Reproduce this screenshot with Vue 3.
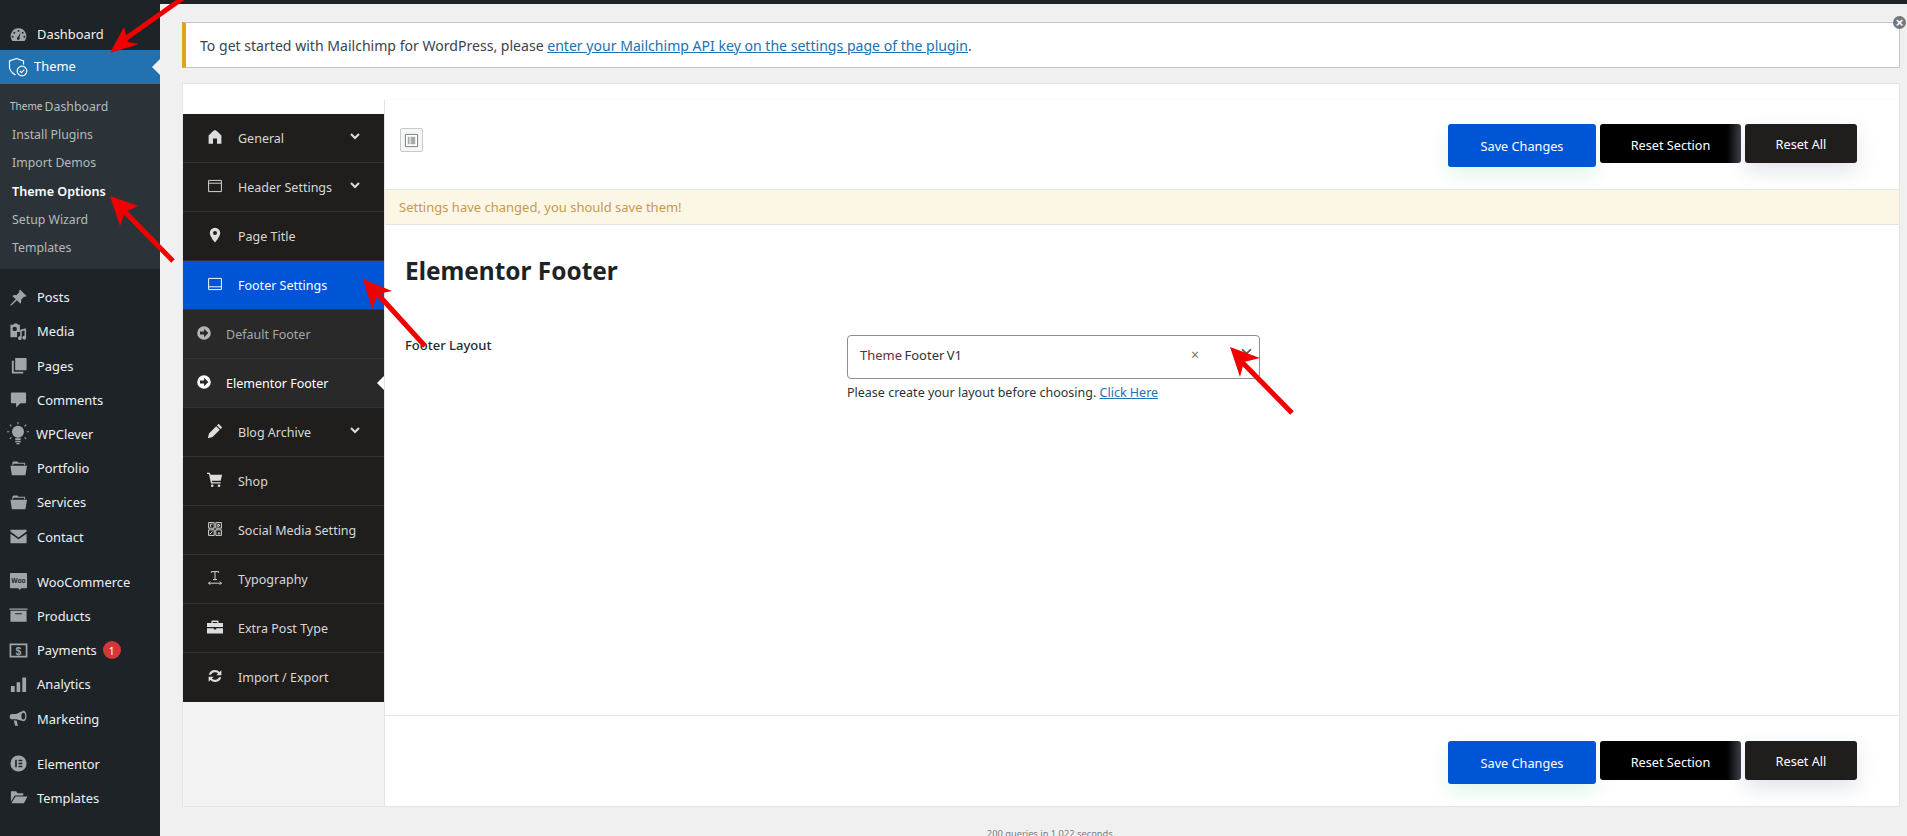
<script setup>
const fill = {
  dashboard: 'M10 3.5a8.2 8.2 0 0 0-6.4 13.3h12.8A8.2 8.2 0 0 0 10 3.5z M10 5.2a1 1 0 1 1 0 2 1 1 0 0 1 0-2z M5.6 7.2a1 1 0 1 1 0 2 1 1 0 0 1 0-2z M14.4 7.2a1 1 0 1 1 0 2 1 1 0 0 1 0-2z M3.8 11.4a1 1 0 1 1 0 2 1 1 0 0 1 0-2z M16.2 11.4a1 1 0 1 1 0 2 1 1 0 0 1 0-2z M12.2 8.2l-1.2 5a1.5 1.5 0 1 1-1.8-.4z',
  posts: 'M11.5 1.5l7 7-1.5 1-1-.5-3.3 3.3c.5 1.7.2 3-.7 4.2l-3.6-3.6L2.5 18.5h-1v-1l5.6-5.6L3.5 8.3c1.2-.9 2.5-1.2 4.2-.7L11 4.3l-.5-1z',
  media: 'M1.5 3h3l1-1.5h3l1 1.5h2v7.5H8.500V16h-7z M6 5a2.300 2.300 0 1 0 0 4.600A2.300 2.300 0 0 0 6 5z M18 6.500v10a2 2 0 1 1-1.600-1.900V9l-3 .7v7.300a2 2 0 1 1-1.600-1.900V8.200z',
  pages: 'M6.500 2h12v13h-12z M3 5h2v11.500h10V18.500H3z',
  comments: 'M3 2.500h14a1 1 0 0 1 1 1v9.500a1 1 0 0 1-1 1h-5l-4.500 4.500V14H3a1 1 0 0 1-1-1V3.500a1 1 0 0 1 1-1z',
  folder: 'M3.500 4l1-1.500h4.500l1 1.500h7v2.500H16V5H4.500v1.500h-1z M1.500 7h17.500l-1.700 10H3z',
  contact: 'M1.500 3h17v1.800L10 11 1.500 4.800z M1.500 7L10 13l8.500-6v10h-17z',
  products: 'M.5 2.500h19v1.500H.5z M1.500 5h17v11.500h-17z M6.500 7.500v1.200h7V7.500z',
  analytics: 'M2 11.500h4V18H2z M8 7.500h3.800V18H8z M14 2.500h4V18h-4z',
  marketing: 'M15.500 1.500a4 6 0 0 1 0 11.500l-8-2.200H3.500a2.500 2.500 0 0 1 0-5.500h4z M15 4a2 3.500 0 1 0 .1 7 2 3.500 0 0 0-.1-7z M5 12h3l1.500 5.500h-3z',
  elementor: 'M10 1.500a8.500 8.500 0 1 0 0 17 8.500 8.500 0 0 0 0-17z M6.500 6h1.700v8H6.500z M10 6h4v1.700h-4z M10 9.200h4v1.700h-4z M10 12.300h4V14h-4z',
  templates: 'M2 3.500h5.500l1.500 2h6V8H6L2 14.500z M6.800 9H19.500l-3.800 7H2.500z',
  home: 'M10 1.500c1.200 0 2 .8 3 1.600L18 8v10.500h-5.500V12h-5v6.500H2V8l5-4.900c1-.8 1.800-1.600 3-1.600z',
  pin: 'M10 1a6.500 6.500 0 0 0-6.500 6.500C3.500 12 10 19.500 10 19.500S16.500 12 16.500 7.500A6.500 6.500 0 0 0 10 1z M10 5a2.500 2.500 0 1 1 0 5 2.500 2.500 0 0 1 0-5z',
  go: 'M10 1.500a8.500 8.500 0 1 0 0 17 8.500 8.500 0 0 0 0-17z M5 8h5V4.800L15.500 10 10 15.200V12H5z',
  pencil: 'M14.500 1l4.500 4.500-2 2L12.500 3z M11.500 4l4.500 4.500-9 9L1 19l1.500-6z',
  cart: 'M0 1h3.500l1 2.500H19l-2 7.500H6.200l.5 1.800H17V14.500H5L2.500 2.500H0z M6.500 15.500a1.700 1.700 0 1 1 0 3.400 1.700 1.700 0 0 1 0-3.400z M15 15.500a1.700 1.700 0 1 1 0 3.400 1.700 1.700 0 0 1 0-3.400z',
  case: 'M7 2h6a1.500 1.500 0 0 1 1.500 1.500V5H20v5H0V5h5.500V3.500A1.500 1.500 0 0 1 7 2z M7.200 3.700V5h5.600V3.700z M0 11.500h8.500V13h3v-1.500H20V18H0z',
  refresh: 'M10 2.500c2.300 0 4.300 1 5.700 2.500L18 2.700V9h-6.300l2.200-2.200A5.500 5.500 0 0 0 5 8.500H2.200A8 8 0 0 1 10 2.500z M2 11h6.300l-2.200 2.200A5.500 5.500 0 0 0 15 11.500h2.800A8 8 0 0 1 4.300 15L2 17.300z'
}
const stroke = {
  header: 'M2 3h16v14H2z M2 6.500h16',
  footer: 'M2 3h16v14H2z M2 13.500h16',
  social: 'M2 2h7v7H2z M11 2h7v7h-7z M2 11h7v7H2z M11 11h7v7h-7z M4.500 7.500V4h2.500 M13.500 3.800l2.800 1.700-2.800 1.700z M3.500 16.500l3.500-3.500 M14.500 14.500a1 1 0 1 0 1 0z',
  type: 'M5.500 3.500V2h9v1.500 M10 2v10 M7.500 12h5 M2 16.500h16 M4 14.500l-2 2 2 2 M16 14.500l2 2-2 2'
}
const side1 = [
  { t: 'Posts', i: 'posts' }, { t: 'Media', i: 'media' }, { t: 'Pages', i: 'pages' },
  { t: 'Comments', i: 'comments' }, { t: 'WPClever', i: 'clever' }, { t: 'Portfolio', i: 'folder' },
  { t: 'Services', i: 'folder' }, { t: 'Contact', i: 'contact' }
]
const side2 = [
  { t: 'WooCommerce', i: 'woo' }, { t: 'Products', i: 'products' }, { t: 'Payments', i: 'pay', badge: 1 },
  { t: 'Analytics', i: 'analytics' }, { t: 'Marketing', i: 'marketing' }
]
const side3 = [{ t: 'Elementor', i: 'elementor' }, { t: 'Templates', i: 'templates' }]
const subs = ['Install Plugins', 'Import Demos', 'Theme Options', 'Setup Wizard', 'Templates']
const nav = [
  { t: 'General', i: 'home', chev: true }, { t: 'Header Settings', i: 'header', chev: true },
  { t: 'Page Title', i: 'pin' }, { t: 'Footer Settings', i: 'footer', kind: 'active' },
  { t: 'Default Footer', i: 'go', kind: 'sub' }, { t: 'Elementor Footer', i: 'go', kind: 'sub on' },
  { t: 'Blog Archive', i: 'pencil', chev: true }, { t: 'Shop', i: 'cart' },
  { t: 'Social Media Setting', i: 'social' }, { t: 'Typography', i: 'type' },
  { t: 'Extra Post Type', i: 'case' }, { t: 'Import / Export', i: 'refresh' }
]
const arrows = [
  { l: '183,-2 118,44', h: '110,53 124,27 128,42 139,44' },
  { l: '173,261 122,209', h: '110,196 138,206 125,212 120,226' },
  { l: '425,346 374,290', h: '363,279 392,291 378,294 372,309' },
  { l: '1292,413 1238,358', h: '1230,347 1260,358 1244,362 1240,377' }
]
</script>

<template>
  <div class="page">
    <div class="topbar"></div>
    <div class="layout">
      <aside class="side">
        <a class="item first">
          <svg class="sicon" viewBox="0 0 20 20"><path :d="fill.dashboard" fill-rule="evenodd" /></svg>
          <span>Dashboard</span>
        </a>
        <a class="item current">
          <svg class="theme-icon" viewBox="0 0 20 20" fill="none" stroke="#fff" stroke-width="1.200">
            <path d="M8.500 1.500l7 2.500v3.500M8.500 1.500L1.500 4v6c0 4 3.500 6.500 6 8" />
            <circle cx="14" cy="14" r="4.800" fill="#2271b1" />
            <path d="M11.800 14l1.700 1.700 2.800-3" />
          </svg>
          <span>Theme</span>
        </a>
        <div class="submenu">
          <a class="sub"><small>Theme</small> Dashboard</a>
          <a v-for="s in subs" :key="s" class="sub" :class="{ strong: s === 'Theme Options' }">{{ s }}</a>
        </div>
        <div class="group">
          <a v-for="m in side1" :key="m.t" class="item">
            <svg v-if="m.i === 'clever'" class="sicon clever" viewBox="0 0 22 22">
              <circle cx="11" cy="9" r="5.500" />
              <path d="M8.500 15h5v1.500h-5z M8.500 17.200h5v1.300h-5z M9.500 19.200h3V20.500h-3z" />
              <path class="rays" d="M11 0v2 M1 9h2 M19 9h2 M3.500 2.500l1.500 1.500 M18.500 2.500L17 4 M3.500 15.500L5 14 M18.500 15.500L17 14" />
            </svg>
            <svg v-else class="sicon" viewBox="0 0 20 20"><path :d="fill[m.i]" fill-rule="evenodd" /></svg>
            <span>{{ m.t }}</span>
          </a>
        </div>
        <div class="group">
          <a v-for="m in side2" :key="m.t" class="item">
            <svg v-if="m.i === 'woo'" class="sicon" viewBox="0 0 20 20">
              <path d="M2 1h16a1 1 0 0 1 1 1v14a1 1 0 0 1-1 1h-5l-2 2-1-2H2a1 1 0 0 1-1-1V2a1 1 0 0 1 1-1z" />
              <text x="10" y="11.500" text-anchor="middle" class="woo">Woo</text>
            </svg>
            <svg v-else-if="m.i === 'pay'" class="sicon" viewBox="0 0 20 20">
              <path class="frame" d="M1.500 3.500h17v13h-17z" />
              <text x="10" y="14.500" text-anchor="middle" class="dollar">$</text>
            </svg>
            <svg v-else class="sicon" viewBox="0 0 20 20"><path :d="fill[m.i]" fill-rule="evenodd" /></svg>
            <span>{{ m.t }}</span>
            <b v-if="m.badge" class="badge">{{ m.badge }}</b>
          </a>
        </div>
        <div class="group">
          <a v-for="m in side3" :key="m.t" class="item">
            <svg class="sicon" viewBox="0 0 20 20"><path :d="fill[m.i]" fill-rule="evenodd" /></svg>
            <span>{{ m.t }}</span>
          </a>
        </div>
      </aside>

      <main class="main">
        <div class="notice">
          <span>To get started with Mailchimp for WordPress, please <a>enter your Mailchimp API key on the settings page of the plugin</a>.</span>
          <i class="dismiss">×</i>
        </div>
        <section class="panel">
          <div class="rail">
            <div class="rail-top"></div>
            <nav class="nav">
              <a v-for="n in nav" :key="n.t" class="nav-item" :class="n.kind">
                <svg class="nicon" viewBox="0 0 20 20">
                  <path v-if="fill[n.i]" :d="fill[n.i]" fill-rule="evenodd" />
                  <path v-else :d="stroke[n.i]" class="line" />
                </svg>
                <span class="nav-label">{{ n.t }}</span>
                <svg v-if="n.chev" class="chev" viewBox="0 0 10 7"><path d="M1 1l4 4 4-4" /></svg>
              </a>
            </nav>
            <div class="rail-bottom"></div>
          </div>
          <div class="content">
            <header class="bar">
              <div class="expand">
                <svg viewBox="0 0 16 16"><path class="frame2" d="M1.500 1.500h13v13h-13z" /><path class="fill2" d="M4 4h2v8H4z M7 4h5v8H7z" /></svg>
              </div>
              <div class="actions">
                <button class="btn save">Save Changes</button>
                <button class="btn reset-s">Reset Section</button>
                <button class="btn reset-a">Reset All</button>
              </div>
            </header>
            <div class="changed">Settings have changed, you should save them!</div>
            <div class="body">
              <h2>Elementor Footer</h2>
              <div class="field">
                <div class="field-label">Footer Layout</div>
                <div class="field-ctl">
                  <div class="select">
                    <span class="val"><em>Theme</em> Footer V1</span>
                    <span class="clear">×</span>
                    <svg class="caret" viewBox="0 0 10 7"><path d="M1 1l4 4 4-4" /></svg>
                  </div>
                  <p class="help">Please create your layout before choosing. <a>Click Here</a></p>
                </div>
              </div>
            </div>
            <footer class="bar bottom">
              <div></div>
              <div class="actions">
                <button class="btn save">Save Changes</button>
                <button class="btn reset-s">Reset Section</button>
                <button class="btn reset-a">Reset All</button>
              </div>
            </footer>
          </div>
        </section>
        <div class="queries">200 queries in 1.022 seconds.</div>
      </main>
    </div>
    <svg class="overlay" viewBox="0 0 1907 836">
      <g v-for="(a, k) in arrows" :key="k">
        <polyline :points="a.l" />
        <polygon :points="a.h" />
      </g>
    </svg>
  </div>
</template>

<style>
html, body { margin: 0; background: #f0f0f1; }
</style>

<style scoped>
.page { position: relative; width: 1907px; height: 836px; overflow: hidden; background: #f0f0f1; font-family: "Noto Sans", "Open Sans", sans-serif; color: #2c3338; display: flex; flex-direction: column; }
.topbar { height: 4px; background: #1d2327; flex: none; }
.layout { flex: 1; display: flex; min-height: 0; }

.side { width: 160px; flex: none; background: #1d2327; padding-top: 12px; }
.item { display: flex; align-items: center; height: 34.200px; padding-left: 9px; color: #f0f0f1; font-size: 12.900px; box-sizing: border-box; position: relative; }
.first { padding-top: 2px; }
.sicon { width: 19px; height: 19px; fill: #a0a5aa; margin-right: 9px; flex: none; }
.clever { width: 24px; height: 24px; margin: 0 6px 0 -3px; }
.rays { stroke: #a0a5aa; stroke-width: 1; fill: none; }
.woo { font: 700 7px "Liberation Sans", sans-serif; fill: #1d2327; }
.dollar { font: 700 11px "Liberation Sans", sans-serif; fill: #a0a5aa; }
.frame { fill: none; stroke: #a0a5aa; stroke-width: 1.800; }
.current { background: #2271b1; color: #fff; padding-left: 8px; height: 34px; }
.current span { margin-top: -3px; }
.current::after { content: ""; position: absolute; right: 0; top: 50%; margin-top: -8px; border: 8px solid transparent; border-right-color: #f0f0f1; border-left-width: 0; }
.theme-icon { width: 20px; height: 20px; margin-right: 6px; flex: none; }
.submenu { background: #2c3338; height: 185px; padding-top: 8px; box-sizing: border-box; }
.sub { display: flex; align-items: center; height: 28.300px; padding-left: 12px; font-size: 12.300px; color: #b4b9be; white-space: pre; }
.sub small { font-size: 10px; margin-left: -2px; margin-right: -1px; color: #c3c4c7; }
.strong { color: #fff; font-weight: 600; font-size: 12.600px; }
.group { padding-top: 11px; }
.badge { margin-left: 6px; width: 18px; height: 18px; border-radius: 50%; background: #d63638; color: #fff; font-size: 11px; font-weight: 400; display: flex; align-items: center; justify-content: center; }

.main { flex: 1; min-width: 0; padding: 18px 7px 0 22px; }
.notice { position: relative; height: 46px; box-sizing: border-box; background: #fff; border: 1px solid #c3c4c7; border-left: 4px solid #dba617; padding-left: 14px; display: flex; align-items: center; font-size: 14.070px; color: #3c434a; }
.notice a, .help a { color: #2271b1; text-decoration: underline; }
.dismiss { position: absolute; right: -7px; top: -7px; width: 13px; height: 13px; border-radius: 50%; background: #72777c; color: #fff; font: 700 13px/13px "Liberation Sans", sans-serif; text-align: center; }

.panel { margin-top: 15px; height: 724px; box-sizing: border-box; background: #fff; border: 1px solid #e5e5e5; display: flex; }
.rail { width: 201px; flex: none; display: flex; flex-direction: column; }
.rail-top { height: 30px; }
.rail-bottom { flex: 1; background: #f3f3f3; }
.nav { display: flex; flex-direction: column; }
.nav-item { position: relative; display: flex; align-items: center; height: 49px; box-sizing: border-box; padding-left: 24px; background: #1f1e1d; border-bottom: 1px solid #333; color: #d8d8d8; font-size: 12.500px; }
.nicon { width: 16px; height: 16px; fill: #ddd; margin-right: 15px; flex: none; margin-top: -3px; }
.line { fill: none; stroke: #ddd; stroke-width: 1.200; }
.chev { position: absolute; left: 167px; top: 19px; width: 10px; height: 7px; }
.chev path, .caret path { fill: none; stroke: #ddd; stroke-width: 2; }
.nav-item.active { background: #0054d6; color: #fff; border-bottom-color: #1f3a66; }
.nav-item.active .nicon .line { stroke: #fff; }
.nav-item.sub { background: #292929; padding-left: 13px; color: #a3a7a9; }
.nav-item.sub .nicon { width: 16px; height: 16px; fill: #b5b5b5; margin-right: 14px; }
.nav-item.sub.on { color: #fff; }
.nav-item.sub.on .nicon { fill: #fff; }
.nav-item.sub.on::after { content: ""; position: absolute; right: 0; top: 50%; margin-top: -7px; border: 7px solid transparent; border-right-color: #fff; border-left-width: 0; }
.nav-item:last-child { border-bottom: 0; }

.content { flex: 1; min-width: 0; margin-top: 15px; border-left: 1px solid #e5e5e5; border-top: 1px solid #fafafa; display: flex; flex-direction: column; }
.bar { height: 89px; flex: none; box-sizing: border-box; padding: 24px 42px 0 15px; display: flex; justify-content: space-between; align-items: flex-start; }
.expand { margin-top: 4px; width: 23px; height: 24px; box-sizing: border-box; border: 1px solid #c9c9c9; border-radius: 2px; background: #f6f7f7; display: flex; align-items: center; justify-content: center; }
.expand svg { width: 15px; height: 15px; }
.frame2 { fill: #fff; stroke: #777; stroke-width: 1; }
.fill2 { fill: #aaa; }
.actions { display: flex; gap: 4px; align-items: flex-start; }
.btn { border: 0; border-radius: 3px; color: #fff; font-family: inherit; font-size: 12.700px; height: 39px; padding: 2px 0 0; }
.save { width: 148px; height: 43px; background: #0054d6; box-shadow: 0 8px 20px rgba(60, 200, 120, .16); padding-top: 1px; }
.reset-s { width: 141px; background: linear-gradient(90deg, #000 90%, #3c4048); }
.reset-a { width: 112px; background: #1f1e1d; box-shadow: 0 8px 20px rgba(70, 85, 130, .16); padding-top: 1px; }
.changed { height: 36px; box-sizing: border-box; background: #fcf6e4; border-top: 1px solid #e5e5e5; border-bottom: 1px solid #e5e5e5; padding-left: 14px; display: flex; align-items: center; font-size: 13px; color: #c49a55; }
.body { flex: 1; padding: 0 20px; }
h2 { margin: 28px 0 0; font-size: 24.400px; line-height: 36px; font-weight: 700; color: #1d2327; }
.field { display: flex; margin-top: 46px; }
.field-label { width: 442px; flex: none; font-size: 13px; font-weight: 500; color: #23282d; padding-top: 1px; line-height: 24px; margin-top: -3px; }
.field-ctl { width: 413px; }
.select { display: flex; align-items: center; height: 44px; box-sizing: border-box; border: 1px solid #8c8f94; border-radius: 4px; padding: 0 12px 5px; font-size: 13px; background: #fff; position: relative; }
.val { flex: 1; word-spacing: -1px; }
.val em { font-style: normal; color: #6d2a3f; }
.clear { position: absolute; left: 343px; top: 9px; color: #777; font-size: 14px; }
.caret { position: absolute; left: 393px; top: 12px; width: 11px; height: 8px; }
.caret path { stroke: #555; stroke-width: 1.600; }
.help { margin: 5px 0 0; font-size: 12.500px; color: #2c3338; line-height: 18px; }
.bottom { height: 91px; border-top: 1px solid #e5e5e5; padding-top: 25px; }
.queries { margin-top: 20px; padding-left: 20px; text-align: center; font-size: 9.300px; color: #787c82; }

.overlay { position: absolute; left: 0; top: 0; width: 1907px; height: 836px; pointer-events: none; }
.overlay polyline { fill: none; stroke: #f00000; stroke-width: 5; }
.overlay polygon { fill: #f00000; }
</style>
